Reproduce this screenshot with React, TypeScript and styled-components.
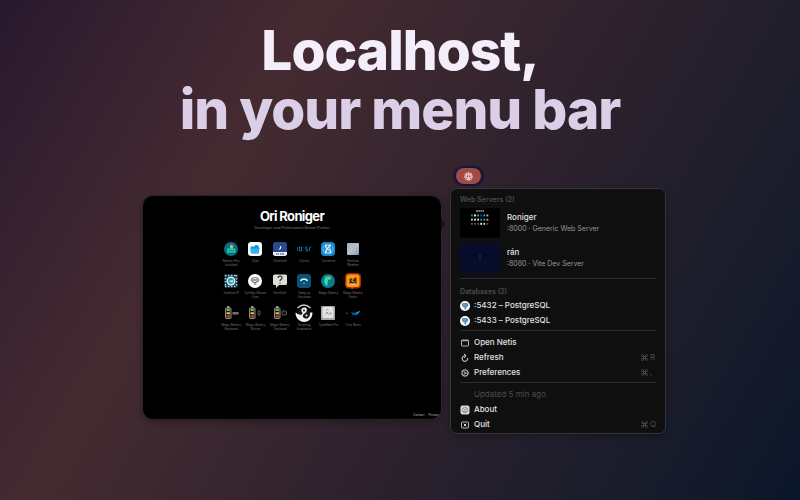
import React from "react";
import styled, { createGlobalStyle } from "styled-components";

const GlobalStyle = createGlobalStyle`
  * { box-sizing: border-box; }
  html, body, #root { min-height: 100%; }
  html, body { margin: 0; padding: 0; background: #0b162a; }
  body { font-family: Inter, "Liberation Sans", sans-serif; -webkit-font-smoothing: antialiased; }
  button { font: inherit; color: inherit; background: none; border: 0; padding: 0; text-align: left; }
  a { color: inherit; text-decoration: none; }
  svg { display: block; flex: none; }
`;

const Page = styled.main`
  min-height: 100vh;
  padding: 21px 16px 32px;
  display: flex;
  flex-direction: column;
  align-items: center;
  background: linear-gradient(120deg, #29192e 0%, #452b31 29%, #2c212d 60%, #1c1d2b 80%, #0b162a 100%);
`;

const Headline = styled.h1`
  margin: 0;
  font-size: 55px;
  line-height: 59px;
  font-weight: 800;
  letter-spacing: -1px;
  text-align: center;
  color: #f4edfa;
`;

const HeadlineSecond = styled.span`
  display: block;
  color: #dbcfe8;
`;

const Stage = styled.section`
  width: 100%;
  padding: 29px 0 0 8px;
  display: grid;
  grid-template-columns: minmax(0, 300px) minmax(0, 216px);
  justify-content: center;
  align-items: start;
  column-gap: 8px;
`;

const Preview = styled.article`
  position: relative;
  margin-top: 27px;
  min-height: 225px;
  padding: 12px 2px 1px;
  display: flex;
  flex-direction: column;
  align-items: center;
  background: #000;
  border: 1px solid #2c2527;
  border-radius: 11px;
  box-shadow: 0 2px 6px rgba(0, 0, 0, 0.3);
`;

const Arrow = styled.svg`
  position: absolute;
  left: 100%;
  top: 19px;
`;

const SiteTitle = styled.h2`
  margin: 0;
  font-size: 13px;
  line-height: 16px;
  font-weight: 700;
  letter-spacing: -0.05em;
  color: #fff;
`;

const Tagline = styled.p`
  margin: 1px 0 11px;
  font-family: "Liberation Sans", sans-serif;
  font-size: 4px;
  line-height: 6px;
  color: #7c7c7c;
`;

const Apps = styled.nav`
  width: 146px;
  display: grid;
  grid-template-columns: repeat(6, minmax(0, 1fr));
`;

const AppLink = styled.a`
  height: 32px;
  display: flex;
  flex-direction: column;
  align-items: center;
  gap: 3px;
`;

const AppName = styled.span`
  font-size: 3px;
  line-height: 4px;
  text-align: center;
  white-space: pre-line;
  color: #777;
`;

const SiteFooter = styled.footer`
  margin-top: auto;
  align-self: flex-end;
  display: flex;
  gap: 4px;
  font-size: 3px;
  line-height: 6px;
  color: #bbb;
`;

const MenuColumn = styled.div`
  display: flex;
  flex-direction: column;
  align-items: flex-start;
`;

const StatusItem = styled.button`
  && {
    margin-left: 6px;
    width: 25px;
    height: 16px;
    display: grid;
    place-items: center;
    background: #a24a47;
    border-radius: 8px;
    box-shadow: 1px 0 0 2px #0d1b38, -1px 0 1px 2px #28123c;
  }
`;

const Menu = styled.div`
  width: 100%;
  margin-top: 4px;
  padding: 4px 9px 1px;
  background: #0f0f0f;
  border: 1px solid #39363a;
  border-radius: 7px;
  box-shadow: 0 2px 6px rgba(0, 0, 0, 0.3);
`;

const SectionLabel = styled.h3`
  margin: 0;
  font-size: 7px;
  line-height: 13px;
  font-weight: 600;
  color: #4c4c4c;
`;

const Servers = styled.div`
  display: grid;
  gap: 5px;
  margin-top: 2px;
`;

const ServerButton = styled.button`
  display: flex;
  align-items: center;
  gap: 7px;
  width: 100%;
`;

const Thumb = styled.svg`
  border-radius: 3px;
`;

const ServerName = styled.span`
  display: block;
  font-size: 8px;
  line-height: 11px;
  font-weight: 500;
  color: #e2e2e2;
`;

const ServerDetail = styled.span`
  display: block;
  font-size: 7px;
  line-height: 11px;
  color: #979797;
`;

const Divider = styled.hr<{ $roomy?: boolean }>`
  height: 1px;
  border: 0;
  margin: ${(p) => (p.$roomy ? "5px 0 6px" : "2px 0 4px")};
  background: #2b2b2b;
`;

const Row = styled.button`
  display: grid;
  grid-template-columns: 10px 1fr auto;
  align-items: center;
  column-gap: 4px;
  width: 100%;
  height: 15px;
  color: #e2e2e2;
  font-size: 8px;
  line-height: 15px;
  font-weight: 500;
  &:disabled { color: #4c4c4c; font-weight: 400; }
`;

const Shortcut = styled.span`
  display: grid;
  grid-template-columns: 8px 6px;
  align-items: center;
  column-gap: 1px;
  color: #4c4c4c;
  font-weight: 400;
`;

const Globe = () => (
  <svg width="9" height="9" viewBox="0 0 18 18" fill="none" stroke="#f3dede" strokeWidth="1.5">
    <circle cx="9" cy="9" r="7.6" />
    <path d="M9 1.4V5M3 4.5 9 5l6-.5M5 6l-3.5 5M13 6l3.500 5M5 6l4-1 4 1 1 5-5 3-5-3zM4 11h10M9 5v9M5 15l4-1 4 1" />
  </svg>
);

const Postgres = () => (
  <svg width="10" height="10" viewBox="0 0 20 20">
    <circle cx="10" cy="10" r="10" fill="#fff" />
    <path d="M4 5.500c2-2 4-1.500 6-1 2-.8 5-.7 6 1 .8 2-.2 5-1.500 7l-2-.5v4l-2 1.500-1.500-1.500v-4l-3 .5C4.500 10 3.500 8 4 5.500z" fill="#4a83a8" />
    <path d="M8 5.500v6M12 5.500c-1 2 .5 4 .5 6" stroke="#c8dde9" strokeWidth="1" fill="none" />
  </svg>
);

const WindowIcon = () => (
  <svg width="10" height="10" viewBox="0 0 20 20" fill="none" stroke="#cfcfcf" strokeWidth="1.7">
    <rect x="3" y="4" width="14" height="12" rx="1.500" />
    <path d="M3 5.500h14" />
  </svg>
);

const RefreshIcon = () => (
  <svg width="10" height="10" viewBox="0 0 20 20" fill="none" stroke="#dedede" strokeWidth="2" strokeLinecap="round">
    <path d="M9 5.500a5.700 5.700 0 1 0 6.500 5.500M8.500 2.500l3.500 3-3 3.500" />
  </svg>
);

const GearIcon = () => (
  <svg width="10" height="10" viewBox="0 0 20 20" fill="none" stroke="#cfcfcf">
    <circle cx="10" cy="10" r="6" strokeWidth="1.600" />
    <circle cx="10" cy="10" r="7.400" strokeWidth="1.500" strokeDasharray="1.600 1.500" />
    <circle cx="10" cy="10" r="2" strokeWidth="1.400" />
    <path d="M12 10h4M9 8.300 7 5M9 11.700 7 15" strokeWidth="1.300" />
  </svg>
);

const AboutIcon = () => (
  <svg width="10" height="10" viewBox="0 0 20 20" fill="none">
    <rect x="1" y="1" width="18" height="18" rx="4" fill="#d7dadd" />
    <circle cx="10" cy="10" r="5.500" stroke="#74797e" strokeWidth="1.300" />
    <path d="m6 7 4 2 4-2M10 9v5M5 12l5 2 5-2" stroke="#74797e" strokeWidth="1.200" />
  </svg>
);

const QuitIcon = () => (
  <svg width="10" height="10" viewBox="0 0 20 20" fill="none" stroke="#d7d7d7" strokeWidth="1.700">
    <rect x="3" y="4" width="14" height="12" rx="1.500" />
    <path d="m7.500 7.500 5 5m0-5-5 5" strokeWidth="2" />
  </svg>
);

const CommandIcon = () => (
  <svg width="7" height="7" viewBox="0 0 14 14" fill="none" stroke="#5c5c5c" strokeWidth="1.300">
    <path d="M5 5H3a2 2 0 1 1 2-2v8a2 2 0 1 1-2-2h8a2 2 0 1 1-2 2V3a2 2 0 1 1 2 2z" />
  </svg>
);

const battery = (
  <>
    <rect x="3" y="4" width="11" height="21" rx="1.500" fill="#171717" stroke="#e6e3c8" strokeWidth="1.200" />
    <path d="M6 2h5" stroke="#e6e3c8" strokeWidth="2.500" />
    <path d="M5 8h7" stroke="#58b45c" strokeWidth="4" />
    <path d="M5 14.500h7" stroke="#efb53f" strokeWidth="4" />
    <path d="M5 21h7" stroke="#d14434" strokeWidth="4" />
  </>
);

const art: Record<string, React.ReactNode> = {
  buddy: (<><circle cx="14" cy="14" r="14" fill="#087080" /><path d="M6 13h6V8l4-3 2 3v5h4l1 8H6z" fill="#25cba8" /><path d="M12 12V8l3-3 3 3v4z" fill="#c9b66b" /><path d="M8 17h12" stroke="#0c9183" strokeWidth="2" /></>),
  files: (<><rect width="28" height="28" rx="6" fill="#f4fbff" /><path d="M5 9h8l2-3 6 1v3l2 2-2 11H7z" fill="#168fd1" /><path d="M4 13h18l-2 9H6z" fill="#35b3f0" /></>),
  night: (<><rect width="28" height="28" rx="5" fill="#29498c" /><path d="M0 20h28v3a5 5 0 0 1-5 5H5a5 5 0 0 1-5-5z" fill="#edf0f5" /><path d="M14 9c0 4-1 5-4 5 4 3 8-1 6-6z" fill="#fff" /><path d="M6 24h3m1 0h2m2 0h3m1 0h4" stroke="#243767" strokeWidth="2" /></>),
  clock: (<g fill="none" stroke="#087fae" strokeWidth="1.700"><path d="M1 10v8M5 10h4v8H5zM13 11v1m0 4v1M21 10h-4v4h4v4h-4M25 10v8M27 10h2" /></g>),
  convert: (<><rect width="28" height="28" rx="7" fill="#1688d0" /><g fill="none" stroke="#e2f4ff" strokeWidth="2"><path d="M8 6h12l-3 5 3 11H8l3-8zM8 6l12 16M17 6 9 22" /><path d="M5 9c-2 5 0 10 3 13M23 9c2 5 0 10-3 13" strokeWidth="1" /></g></>),
  glass: (<><defs><linearGradient id="glassFill" x1="0" y1="0" x2="1" y2="1"><stop stopColor="#92b4d5" /><stop offset=".5" stopColor="#b8bdc5" /><stop offset="1" stopColor="#7698b7" /></linearGradient></defs><rect x="2" y="2" width="24" height="24" rx="2" fill="url(#glassFill)" /><path d="M9 3v23m5-23v23m5-23v23M3 9h22M3 15h22M3 21h22" stroke="#c9cbd0" strokeWidth=".4" /></>),
  dots: (<><rect x="1" y="1" width="26" height="26" fill="#103c50" /><path d="M2 3h24M2 25h24M3 2v24M25 2v24" stroke="#a9ccd5" strokeWidth="3" strokeDasharray="3 3" /><circle cx="14" cy="14" r="9" fill="#d5edf2" /><circle cx="14" cy="14" r="6" fill="#2d8caf" /><path d="m9 14 10-3-2 7z" fill="#9fe2e8" /></>),
  mouse: (<><circle cx="14" cy="14" r="14" fill="#fff" /><g fill="none" stroke="#333" strokeWidth="1.300"><ellipse cx="14" cy="12" rx="8" ry="5" /><circle cx="11" cy="12" r="2" /><circle cx="17" cy="12" r="2" /><path d="M14 16v3m-3 1h6" /></g></>),
  question: (<><path d="M3 1h22q3 0 3 3v15q0 3-3 3H12l-6 6v-6H3q-3 0-3-3V4q0-3 3-3z" fill="#deddd9" /><path d="M10 8c0-5 9-5 8 0 0 3-4 3-4 6M14 17v2" fill="none" stroke="#333" strokeWidth="2.500" /></>),
  call: (<><rect width="28" height="28" rx="6" fill="#0d5277" /><path d="M6 13C9 7 19 7 22 13l-3 2-2-3h-6l-2 3z" fill="#def3fb" /><path d="M14 16v4m-2-2 2 2 2-2" fill="none" stroke="#77b2ca" /></>),
  magic: (<><circle cx="14" cy="14" r="14" fill="#087c91" /><path d="M9 5h6l2 5-3 2-1 11H9l-3-9z" fill="#25d6a4" /><path d="M14 5h6v6h-6z" fill="#9cb651" /><path d="M10 9v10" stroke="#9cf1d2" /></>),
  audio: (<><rect x="-2" y="-2" width="32" height="31" rx="8" fill="#a52b04" /><rect x="1" y="1" width="26" height="25" rx="5" fill="#ff9a17" /><path d="M7 20V9h6l-2 6 7-8h3v13z" fill="#50280c" /><path d="M8 20h12M12 13l4 4" stroke="#ffe08a" strokeWidth="2" /><path d="m10 26 2 5 4-5z" fill="#d65308" /></>),
  keyboard: (<>{battery}<path d="M17 12h12v5H17z" fill="#7b7b7b" /><path d="M18 14h10" stroke="#292929" strokeDasharray="1 1" /></>),
  mouseBattery: (<>{battery}<ellipse cx="22" cy="14" rx="2.500" ry="5" fill="#111" stroke="#777" strokeWidth="1.200" /></>),
  trackpad: (<>{battery}<rect x="18" y="10" width="9" height="8" rx="2" fill="#111" stroke="#888" strokeWidth="1.200" /></>),
  hook: (<><path d="M1 4Q14-8 27 4" fill="none" stroke="#c8c8c8" strokeWidth="3" /><circle cx="14" cy="15" r="12" fill="#171717" /><path d="M16 3C9 3 7 8 10 12c3 4-1 8-8 4L-3 13C-3 25 6 32 14 32s17-6 17-19l-5 0c1 8-4 13-9 12-6-1-7-7-2-10 5-2 7-11 1-12z" fill="#f3f3f3" /><circle cx="14" cy="9" r="2" fill="#171717" /><circle cx="19" cy="19" r="2" fill="#f3f3f3" /></>),
  key: (<><rect width="28" height="28" rx="2" fill="#a6a6a6" /><rect x="3" y="2" width="22" height="22" rx="3" fill="#e3e3e3" /><path d="m9 17 3-5 3 5m2 0 2-4 2 4M10 9l3-2 2 2" fill="none" stroke="#666" strokeWidth="1.200" /></>),
  bird: (<g fill="#0771b7"><path d="M0 11v5h5v-1H1v-4zM9 12l8 2 11-4-3 5-6 5v-4l-6 3v-4z" /><path d="M19 14 28 9l-3 6z" fill="#0ba1dc" /></g>),
};

const apps: [string, string][] = [
  ["buddy", "Battery Plus\nIncluded"], ["files", "Clipit"], ["night", "Clearbold"],
  ["clock", "Clockit"], ["convert", "Converter"], ["glass", "Desktop\nWeather"],
  ["dots", "Eyedock R"], ["mouse", "EyeSpy Mouse\nEyes"], ["question", "FactGoth"],
  ["call", "Hang up\nAssistant"], ["magic", "Magic Battery"], ["audio", "Magic Battery\nAudio"],
  ["keyboard", "Magic Battery\nKeyboard"], ["mouseBattery", "Magic Battery\nMouse"], ["trackpad", "Magic Battery\nTrackpad"],
  ["hook", "Scripting\nInspiration"], ["key", "TypeMate Pro"], ["bird", "Tinto Barra"],
];

const SitePreview = () => (
  <Thumb width="40" height="30" viewBox="0 0 40 30">
    <rect width="40" height="30" fill="#000" />
    <path d="M16 3h8" stroke="#ddd" strokeWidth="1" strokeDasharray="2 .3" />
    {["#128d9c", "#fff", "#7195ca", "#0b5580", "#2aa5ee", "#9fb7d0",
      "#a9dce5", "#eee", "#ddd", "#2b8eb9", "#1aae99", "#ff9b24",
      "#555", "#555", "#555", "#eee", "#ccc", "#096493"].map((fill, i) => (
      <rect key={i} x={11 + (i % 6) * 3.1} y={6.500 + Math.floor(i / 6) * 4.200} width="1.800" height="1.900" fill={fill} />
    ))}
  </Thumb>
);

const BluePreview = () => (
  <Thumb width="40" height="30" viewBox="0 0 40 30">
    <rect width="40" height="30" fill="#070c2b" />
    <path d="M19 13h2M19.500 17h1" stroke="#31536c" />
  </Thumb>
);

const servers = [
  { name: "Roniger", detail: ":8000 · Generic Web Server", preview: <SitePreview /> },
  { name: "rán", detail: ":8080 · Vite Dev Server", preview: <BluePreview /> },
];

interface MenuRowProps {
  icon?: React.ReactNode;
  label: string;
  shortcut?: string;
  disabled?: boolean;
}

const MenuRow = ({ icon, label, shortcut, disabled }: MenuRowProps) => (
  <Row disabled={disabled}>
    {icon ?? <span />}
    <span>{label}</span>
    {shortcut && <Shortcut><CommandIcon /><span>{shortcut}</span></Shortcut>}
  </Row>
);

export default function App() {
  return (
    <>
      <GlobalStyle />
      <Page>
        <Headline>Localhost,<HeadlineSecond>in your menu bar</HeadlineSecond></Headline>
        <Stage>
          <Preview>
            <SiteTitle>Ori Roniger</SiteTitle>
            <Tagline>Developer and Professional Button Pusher</Tagline>
            <Apps>
              {apps.map(([id, name]) => (
                <AppLink href="#" key={id}>
                  <svg width="14" height="14" viewBox="0 0 28 28" overflow="visible">{art[id]}</svg>
                  <AppName>{name}</AppName>
                </AppLink>
              ))}
            </Apps>
            <SiteFooter><a href="#">Contact</a><a href="#">Privacy</a></SiteFooter>
            <Arrow width="7" height="18" viewBox="0 0 7 18">
              <path d="M0 0Q0 3 2 5L6 9 2 13Q0 15 0 18z" fill="#171416" />
              <path d="M0 0Q0 3 2 5L6 9 2 13Q0 15 0 18" fill="none" stroke="#3b3336" strokeWidth=".7" />
            </Arrow>
          </Preview>
          <MenuColumn>
            <StatusItem aria-label="Netis"><Globe /></StatusItem>
            <Menu>
              <SectionLabel>Web Servers (2)</SectionLabel>
              <Servers>
                {servers.map((s) => (
                  <ServerButton key={s.name}>
                    {s.preview}
                    <span><ServerName>{s.name}</ServerName><ServerDetail>{s.detail}</ServerDetail></span>
                  </ServerButton>
                ))}
              </Servers>
              <Divider $roomy />
              <SectionLabel>Databases (2)</SectionLabel>
              <MenuRow icon={<Postgres />} label=":5432 – PostgreSQL" />
              <MenuRow icon={<Postgres />} label=":5433 – PostgreSQL" />
              <Divider />
              <MenuRow icon={<WindowIcon />} label="Open Netis" />
              <MenuRow icon={<RefreshIcon />} label="Refresh" shortcut="R" />
              <MenuRow icon={<GearIcon />} label="Preferences" shortcut="," />
              <Divider />
              <MenuRow label="Updated 5 min ago" disabled />
              <MenuRow icon={<AboutIcon />} label="About" />
              <MenuRow icon={<QuitIcon />} label="Quit" shortcut="Q" />
            </Menu>
          </MenuColumn>
        </Stage>
      </Page>
    </>
  );
}
